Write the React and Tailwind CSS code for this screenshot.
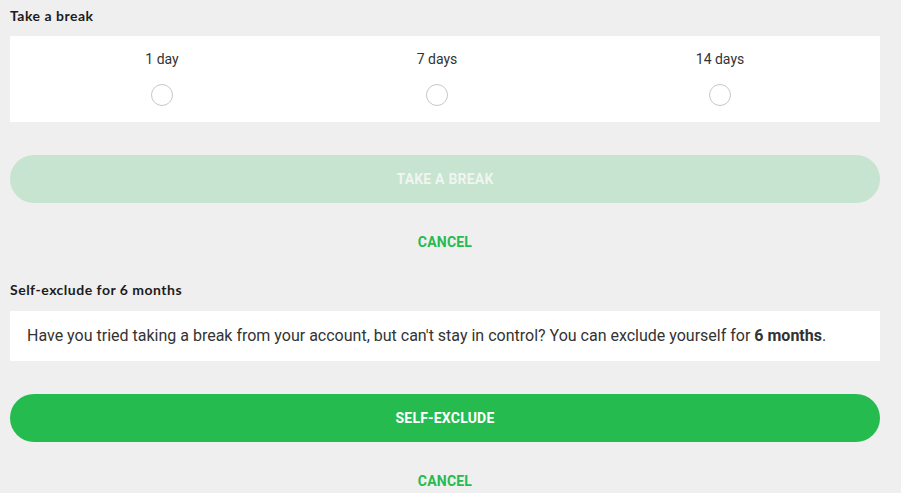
import React from "react";

const periods = [
  { label: "1 day", ml: "ml-[102px]" },
  { label: "7 days", ml: "ml-[175px]" },
  { label: "14 days", ml: "ml-[183px]" },
];

const headingFont = { fontFamily: "Lato, 'Noto Sans', sans-serif" };

export default function App() {
  return (
    <div
      className="min-h-[493px] w-[901px] bg-[#efefef] pl-[10px] pr-[21px] pt-[8px] pb-[4px] text-[#333]"
      style={{ fontFamily: "Roboto, 'Liberation Sans', sans-serif" }}
    >
      {/* Take a break */}
      <h2 className="text-[14px] font-bold leading-[16px] tracking-[0.5px] text-[#1c1c1c]" style={headingFont}>
        Take a break
      </h2>
      <div className="mt-[12px] flex h-[86px] w-[870px] bg-white">
        {periods.map((p) => (
          <label key={p.label} className={`${p.ml} flex w-[100px] flex-col items-center pt-[15px]`}>
            <span className="text-[14px] leading-[16px] text-[#333]">{p.label}</span>
            <span className="mt-[17px] block h-[22px] w-[22px] rounded-full border border-[#c8c8c8] bg-white" />
          </label>
        ))}
      </div>

      <button
        type="button"
        disabled
        className="mt-[33px] flex h-[48px] w-[870px] items-center justify-center rounded-full bg-[#c6e4cf] text-[14px] font-bold uppercase tracking-[0.2px] text-[#f0f5f1]"
      >
        Take a break
      </button>
      <div className="mt-[31px] text-center text-[14px] font-bold leading-[16px] tracking-[0.2px] text-[#25bb4f]">CANCEL</div>

      {/* Self-exclude */}
      <h2 className="mt-[32px] text-[14px] font-bold leading-[16px] tracking-[0.5px] text-[#1c1c1c]" style={headingFont}>
        Self-exclude for 6 months
      </h2>
      <div className="mt-[13px] flex h-[50px] w-[870px] items-center bg-white px-[17px]">
        <p className="text-[16px] leading-[20px] text-[#333]">
          Have you tried taking a break from your account, but can't stay in control? You can exclude yourself for{" "}
          <b className="font-bold">6 months</b>.
        </p>
      </div>

      <button
        type="button"
        className="mt-[33px] flex h-[48px] w-[870px] items-center justify-center rounded-full bg-[#25bb4f] text-[14px] font-bold uppercase tracking-[0.2px] text-white"
      >
        Self-exclude
      </button>
      <div className="mt-[31px] text-center text-[14px] font-bold leading-[16px] tracking-[0.2px] text-[#25bb4f]">CANCEL</div>
    </div>
  );
}
